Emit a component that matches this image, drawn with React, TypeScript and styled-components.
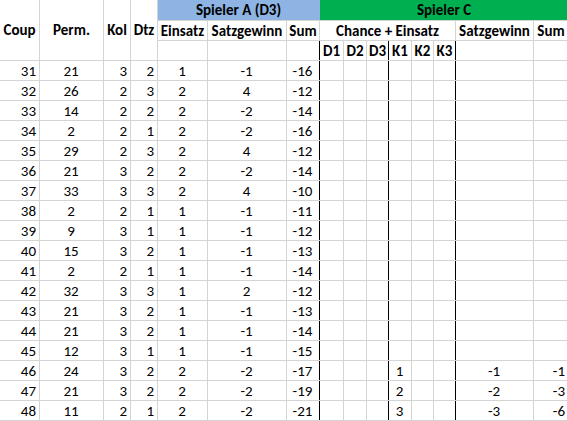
import React from "react";
import styled, { createGlobalStyle } from "styled-components";

const GlobalStyle = createGlobalStyle`
  html, body {
    margin: 0;
    padding: 0;
    background: #ffffff;
    overflow: hidden;
  }
`;

const GRID = "#d4d4d4";
const BLUE = "#8db4e2";
const GREEN = "#00b050";

const COLS = [40, 64, 27, 27, 50, 79, 33, 24, 23, 22, 23, 22, 22, 78, 35];

type Align = "left" | "center" | "right";

const Sheet = styled.table`
  border-collapse: collapse;
  table-layout: fixed;
  width: ${COLS.reduce((a, b) => a + b, 0)}px;
  margin: -1px 0 0 -1px;
  font-family: Carlito, Calibri, Lato, sans-serif;
  font-size: 15px;
  color: #000000;
`;

const Row = styled.tr<{ $first?: boolean }>`
  height: ${(p) => (p.$first ? 21 : 20)}px;
`;

const Cell = styled.td<{ $align?: Align; $edge?: boolean }>`
  border: 1px solid ${GRID};
  ${(p) => (p.$edge ? "border-right-color: #000000;" : "")}
  padding: 0 3px 0 2px;
  line-height: 18px;
  text-align: ${(p) => p.$align ?? "right"};
  vertical-align: bottom;
  white-space: nowrap;
  overflow: hidden;
`;

const Head = styled.th<{ $fill?: string; $edge?: boolean }>`
  border: 1px solid ${GRID};
  ${(p) => (p.$fill ? `background: ${p.$fill}; border-color: ${p.$fill}; border-bottom-color: ${GRID};` : "")}
  ${(p) => (p.$edge ? "border-right-color: #000000;" : "")}
  padding: 0;
  line-height: 18px;
  font-weight: bold;
  text-align: center;
  vertical-align: middle;
  white-space: nowrap;
  overflow: hidden;
`;

type DataRow = {
  coup: number;
  perm: number;
  kol: number;
  dtz: number;
  einsatz: number;
  satz: number;
  sum: number;
  k1?: number;
  satzC?: number;
  sumC?: number;
};

const rows: DataRow[] = [
  { coup: 31, perm: 21, kol: 3, dtz: 2, einsatz: 1, satz: -1, sum: -16 },
  { coup: 32, perm: 26, kol: 2, dtz: 3, einsatz: 2, satz: 4, sum: -12 },
  { coup: 33, perm: 14, kol: 2, dtz: 2, einsatz: 2, satz: -2, sum: -14 },
  { coup: 34, perm: 2, kol: 2, dtz: 1, einsatz: 2, satz: -2, sum: -16 },
  { coup: 35, perm: 29, kol: 2, dtz: 3, einsatz: 2, satz: 4, sum: -12 },
  { coup: 36, perm: 21, kol: 3, dtz: 2, einsatz: 2, satz: -2, sum: -14 },
  { coup: 37, perm: 33, kol: 3, dtz: 3, einsatz: 2, satz: 4, sum: -10 },
  { coup: 38, perm: 2, kol: 2, dtz: 1, einsatz: 1, satz: -1, sum: -11 },
  { coup: 39, perm: 9, kol: 3, dtz: 1, einsatz: 1, satz: -1, sum: -12 },
  { coup: 40, perm: 15, kol: 3, dtz: 2, einsatz: 1, satz: -1, sum: -13 },
  { coup: 41, perm: 2, kol: 2, dtz: 1, einsatz: 1, satz: -1, sum: -14 },
  { coup: 42, perm: 32, kol: 3, dtz: 3, einsatz: 1, satz: 2, sum: -12 },
  { coup: 43, perm: 21, kol: 3, dtz: 2, einsatz: 1, satz: -1, sum: -13 },
  { coup: 44, perm: 21, kol: 3, dtz: 2, einsatz: 1, satz: -1, sum: -14 },
  { coup: 45, perm: 12, kol: 3, dtz: 1, einsatz: 1, satz: -1, sum: -15 },
  { coup: 46, perm: 24, kol: 3, dtz: 2, einsatz: 2, satz: -2, sum: -17, k1: 1, satzC: -1, sumC: -1 },
  { coup: 47, perm: 21, kol: 3, dtz: 2, einsatz: 2, satz: -2, sum: -19, k1: 2, satzC: -2, sumC: -3 },
  { coup: 48, perm: 11, kol: 2, dtz: 1, einsatz: 2, satz: -2, sum: -21, k1: 3, satzC: -3, sumC: -6 },
];

export default function App() {
  return (
    <>
      <GlobalStyle />
      <Sheet>
        <colgroup>
          {COLS.map((w, i) => (
            <col key={i} width={w} />
          ))}
        </colgroup>
        <thead>
          <Row $first>
            <Head rowSpan={3}>Coup</Head>
            <Head rowSpan={3}>Perm.</Head>
            <Head rowSpan={3}>Kol</Head>
            <Head rowSpan={3}>Dtz</Head>
            <Head colSpan={3} $fill={BLUE}>
              Spieler A (D3)
            </Head>
            <Head colSpan={8} $fill={GREEN}>
              Spieler C
            </Head>
          </Row>
          <Row>
            <Head>Einsatz</Head>
            <Head>Satzgewinn</Head>
            <Head>Sum</Head>
            <Head colSpan={6}>Chance + Einsatz</Head>
            <Head>Satzgewinn</Head>
            <Head>Sum</Head>
          </Row>
          <Row>
            <Head />
            <Head />
            <Head $edge />
            <Head>D1</Head>
            <Head>D2</Head>
            <Head $edge>D3</Head>
            <Head>K1</Head>
            <Head>K2</Head>
            <Head $edge>K3</Head>
            <Head />
            <Head />
          </Row>
        </thead>
        <tbody>
          {rows.map((r) => (
            <Row key={r.coup}>
              <Cell>{r.coup}</Cell>
              <Cell $align="center">{r.perm}</Cell>
              <Cell>{r.kol}</Cell>
              <Cell>{r.dtz}</Cell>
              <Cell $align="center">{r.einsatz}</Cell>
              <Cell $align="center">{r.satz}</Cell>
              <Cell $align="center" $edge>
                {r.sum}
              </Cell>
              <Cell />
              <Cell />
              <Cell $edge />
              <Cell $align="center">{r.k1 ?? ""}</Cell>
              <Cell />
              <Cell $edge />
              <Cell $align="center">{r.satzC ?? ""}</Cell>
              <Cell>{r.sumC ?? ""}</Cell>
            </Row>
          ))}
        </tbody>
      </Sheet>
    </>
  );
}
